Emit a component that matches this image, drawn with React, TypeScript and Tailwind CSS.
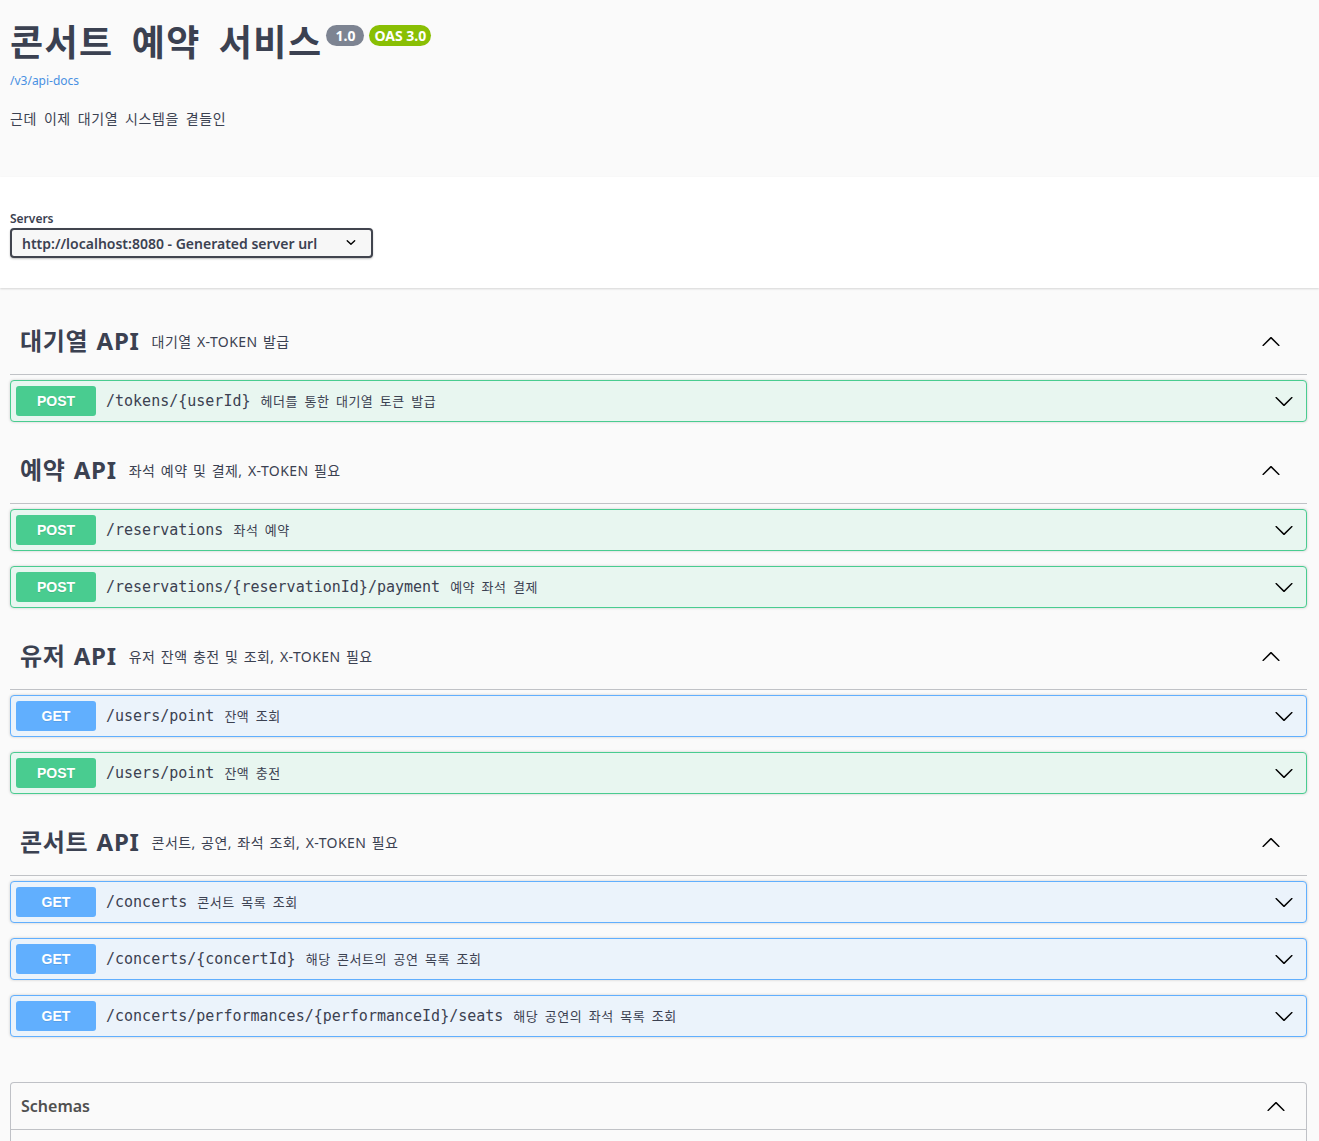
import React from "react";

const F = { fontFamily: '"Noto Sans", "Noto Sans CJK KR", sans-serif' };
const KO = "tracking-[0.04em] [word-spacing:0.2em]";

function Down({ className = "" }: { className?: string }) {
  return (
    <svg viewBox="0 0 20 20" width="20" height="20" className={className}>
      <path d="M17.418 6.109c.272-.268.709-.268.979 0s.271.701 0 .969l-7.908 7.83c-.27.268-.707.268-.979 0l-7.908-7.83c-.27-.268-.27-.701 0-.969.271-.268.709-.268.979 0L10 13.25l7.418-7.141z" fill="#000" />
    </svg>
  );
}
function Up({ className = "" }: { className?: string }) {
  return (
    <svg viewBox="0 0 20 20" width="20" height="20" className={className}>
      <path d="M17.418 14.908c.272.268.709.268.979 0s.271-.701 0-.969l-7.908-7.83c-.27-.268-.707-.268-.979 0l-7.908 7.83c-.27.268-.27.701 0 .969.271.268.709.268.979 0L10 7.767l7.418 7.141z" fill="#000" />
    </svg>
  );
}

type Op = { m: "GET" | "POST"; path: string; sum: string };

function OpBlock({ op }: { op: Op }) {
  const post = op.m === "POST";
  return (
    <div
      className={`mb-[15px] flex h-[42px] items-center rounded-[4px] border pl-[5px] pr-[12px] shadow-[0_0_3px_rgba(0,0,0,0.19)] ${
        post ? "border-[#49cc90] bg-[#e8f6f0]" : "border-[#61affe] bg-[#ebf3fb]"
      }`}
    >
      <span
        className={`flex h-[30px] w-[80px] items-center justify-center rounded-[3px] text-[14px] font-bold text-white ${
          post ? "bg-[#49cc90]" : "bg-[#61affe]"
        }`}
        style={{ fontFamily: '"Liberation Sans", "Noto Sans", sans-serif', textShadow: "0 1px 0 rgba(0,0,0,.1)" }}
      >
        {op.m}
      </span>
      <span
        className="ml-[10px] mt-[1px] text-[15px] font-normal text-[#3b4151]"
        style={{ fontFamily: '"DejaVu Sans Mono", "Noto Sans CJK KR", monospace' }}
      >
        {op.path}
      </span>
      <span className={`ml-[10px] mt-[1px] text-[13px] text-[#3b4151] ${KO}`} style={F}>
        {op.sum}
      </span>
      <div className="flex-1" />
      <Down />
    </div>
  );
}

function Tag({ name, desc, ops }: { name: string; desc: string; ops: Op[] }) {
  return (
    <div>
      <div className="mb-[5px] flex h-[67px] items-center border-b border-[#3b41514d] pl-[10px] pr-[26px]">
        <span className="text-[24px] font-bold text-[#3b4151] tracking-[0.03em] [word-spacing:0.05em]" style={F}>
          {name}
        </span>
        <span className="ml-[12px] text-[14px] text-[#3b4151] tracking-[0.03em] [word-spacing:0.1em]" style={F}>
          {desc}
        </span>
        <div className="flex-1" />
        <Up />
      </div>
      {ops.map((o, i) => (
        <OpBlock key={i} op={o} />
      ))}
    </div>
  );
}

export default function App() {
  return (
    <div className="min-h-[1141px] bg-[#fafafa] text-[#3b4151]" style={F}>
      <div className="px-[10px] pt-[18px] h-[177px]">
        <div className="flex items-start">
          <h1 className={`text-[36px] font-bold leading-[50px] text-[#3b4151] ${KO}`} style={F}>
            콘서트 예약 서비스
          </h1>
          <span className="ml-[4px] mt-[7px] rounded-[57px] bg-[#7d8492] px-[9px] py-[1px] text-[14px] font-bold leading-[19px] text-white">
            1.0
          </span>
          <span className="ml-[5px] mt-[7px] rounded-[57px] bg-[#89bf04] px-[5px] py-[1px] text-[14px] font-bold leading-[19px] text-white">
            OAS 3.0
          </span>
        </div>
        <div className="mt-[4px] text-[12px] text-[#4990e2]">/v3/api-docs</div>
        <div className={`mt-[18px] text-[14px] text-[#3b4151] ${KO}`}>근데 이제 대기열 시스템을 곁들인</div>
      </div>
      <div className="h-[111px] bg-white px-[10px] pt-[34px] shadow-[0_1px_2px_0_rgba(0,0,0,0.15)]">
        <div className="text-[12px] font-semibold leading-[16px] text-[#3b4151]">Servers</div>
        <div className="mt-[1px] flex h-[30px] w-[363px] items-center rounded-[4px] border-2 border-[#41444e] bg-[#f7f7f7] pl-[10px] pr-[14px] shadow-[0_1px_2px_0_rgba(0,0,0,0.25)]">
          <span className="text-[14px] font-semibold text-[#3b4151]">http://localhost:8080 - Generated server url</span>
          <div className="flex-1" />
          <svg viewBox="0 0 20 20" width="12" height="12">
            <path d="M13.418 7.859a.695.695 0 01.978 0 .68.68 0 010 .969l-3.908 3.83a.697.697 0 01-.979 0l-3.908-3.83a.68.68 0 010-.969.695.695 0 01.978 0L10 11l3.418-3.141z" fill="#000" transform="scale(1.6) translate(-3.8,-4.5)" />
          </svg>
        </div>
      </div>
      <div className="pl-[10px] pr-[12px] pt-[20px]">
        <Tag
          name="대기열 API"
          desc="대기열 X-TOKEN 발급"
          ops={[{ m: "POST", path: "/tokens/{userId}", sum: "헤더를 통한 대기열 토큰 발급" }]}
        />
        <Tag
          name="예약 API"
          desc="좌석 예약 및 결제, X-TOKEN 필요"
          ops={[
            { m: "POST", path: "/reservations", sum: "좌석 예약" },
            { m: "POST", path: "/reservations/{reservationId}/payment", sum: "예약 좌석 결제" },
          ]}
        />
        <Tag
          name="유저 API"
          desc="유저 잔액 충전 및 조회, X-TOKEN 필요"
          ops={[
            { m: "GET", path: "/users/point", sum: "잔액 조회" },
            { m: "POST", path: "/users/point", sum: "잔액 충전" },
          ]}
        />
        <Tag
          name="콘서트 API"
          desc="콘서트, 공연, 좌석 조회, X-TOKEN 필요"
          ops={[
            { m: "GET", path: "/concerts", sum: "콘서트 목록 조회" },
            { m: "GET", path: "/concerts/{concertId}", sum: "해당 콘서트의 공연 목록 조회" },
            { m: "GET", path: "/concerts/performances/{performanceId}/seats", sum: "해당 공연의 좌석 목록 조회" },
          ]}
        />
        <div className="mt-[45px] rounded-t-[4px] border border-b-0 border-[#3b41514d]">
          <div className="flex h-[47px] items-center border-b border-[#3b41514d] pl-[10px] pr-[20px]">
            <span className="text-[16px] font-semibold text-[#505050]">Schemas</span>
            <div className="flex-1" />
            <Up />
          </div>
          <div className="h-[40px]" />
        </div>
      </div>
    </div>
  );
}
